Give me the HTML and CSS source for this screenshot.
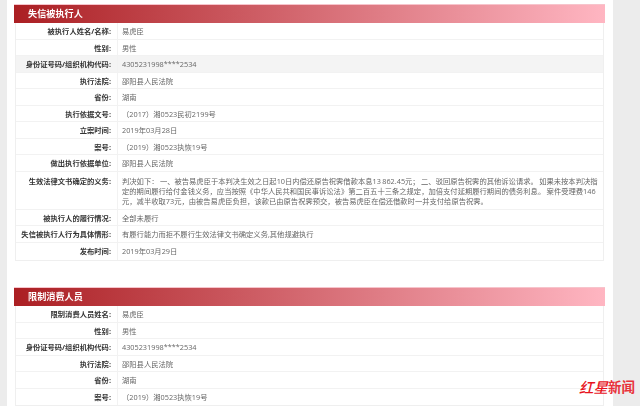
FILE: index.html
```html
<!DOCTYPE html>
<html lang="zh">
<head>
<meta charset="utf-8">
<title>失信被执行人</title>
<link rel="stylesheet" href="styles.css">
</head>
<body>
<div class="gutter-left"></div>
<main class="page">
  <section class="panel">
    <h2 class="panel-title">失信被执行人</h2>
    <div class="rows">
      <div class="row"><div class="label">被执行人姓名/名称:</div><div class="value">易虎臣</div></div>
      <div class="row"><div class="label">性别:</div><div class="value">男性</div></div>
      <div class="row shaded"><div class="label">身份证号码/组织机构代码:</div><div class="value">4305231998****2534</div></div>
      <div class="row"><div class="label">执行法院:</div><div class="value">邵阳县人民法院</div></div>
      <div class="row"><div class="label">省份:</div><div class="value">湖南</div></div>
      <div class="row"><div class="label">执行依据文号:</div><div class="value">（2017）湘0523民初2199号</div></div>
      <div class="row"><div class="label">立案时间:</div><div class="value">2019年03月28日</div></div>
      <div class="row"><div class="label">案号:</div><div class="value">（2019）湘0523执恢19号</div></div>
      <div class="row"><div class="label">做出执行依据单位:</div><div class="value">邵阳县人民法院</div></div>
      <div class="row tall"><div class="label">生效法律文书确定的义务:</div><div class="value">判决如下： 一、被告易虎臣于本判决生效之日起10日内偿还原告祝霁借款本息13 862.45元； 二、驳回原告祝霁的其他诉讼请求。 如果未按本判决指定的期间履行给付金钱义务，应当按照《中华人民共和国民事诉讼法》第二百五十三条之规定，加倍支付延期履行期间的债务利息。 案件受理费146元，减半收取73元，由被告易虎臣负担，该款已由原告祝霁预交，被告易虎臣在偿还借款时一并支付给原告祝霁。</div></div>
      <div class="row"><div class="label">被执行人的履行情况:</div><div class="value">全部未履行</div></div>
      <div class="row"><div class="label">失信被执行人行为具体情形:</div><div class="value">有履行能力而拒不履行生效法律文书确定义务,其他规避执行</div></div>
      <div class="row"><div class="label">发布时间:</div><div class="value">2019年03月29日</div></div>
    </div>
  </section>
  <section class="panel">
    <h2 class="panel-title">限制消费人员</h2>
    <div class="rows">
      <div class="row"><div class="label">限制消费人员姓名:</div><div class="value">易虎臣</div></div>
      <div class="row"><div class="label">性别:</div><div class="value">男性</div></div>
      <div class="row"><div class="label">身份证号码/组织机构代码:</div><div class="value">4305231998****2534</div></div>
      <div class="row"><div class="label">执行法院:</div><div class="value">邵阳县人民法院</div></div>
      <div class="row"><div class="label">省份:</div><div class="value">湖南</div></div>
      <div class="row"><div class="label">案号:</div><div class="value">（2019）湘0523执恢19号</div></div>
    </div>
  </section>
</main>
<div class="gutter-right"></div>
<div class="watermark"><span class="wm-red">红星</span><span class="wm-news">新闻</span></div>
</body>
</html>
```
FILE: styles.css
```css
* { box-sizing: border-box; }
html, body { margin: 0; height: 406px; overflow: hidden; }
body {
  display: flex;
  background: #ececec;
  font-family: "Open Sans", "Noto Sans CJK SC", sans-serif;
  font-size: 7.3px;
  color: #666;
}
.gutter-left { width: 7px; flex: none; }
.gutter-right { width: 27px; flex: none; }
.page {
  width: 606px;
  flex: none;
  background: #fff;
  padding: 3.5px 8px 0 7px;
  filter: blur(0.4px);
}
.panel { margin-bottom: 26px; }
.panel-title {
  margin: 0;
  height: 19.5px;
  line-height: 18.5px;
  padding-left: 14px;
  font-size: 9.15px;
  font-weight: bold;
  color: #fff;
  background: linear-gradient(to right, #ab1f23, #ffb6c2);
  border-top: 1px solid #f7c4cc;
}
.rows {
  margin: 0 1px;
  border-right: 1px solid #efefef;
  border-left: 1px solid #efefef;
  border-bottom: 1px solid #efefef;
}
.row {
  display: flex;
  height: 16.55px;
  border-bottom: 1px solid #f2f2f2;
}
.row:last-child { border-bottom: 0; }
.row.shaded { background: #f4f4f4; }
.row.tall { height: 38px; }
.label {
  width: 102px;
  flex: none;
  padding: 3px 6px 0 0;
  line-height: 10px;
  text-align: right;
  font-weight: bold;
  color: #333;
  border-right: 1px solid #f2f2f2;
}
.value {
  flex: 1;
  padding: 3px 0 0 4px;
  line-height: 10.2px;
  word-spacing: -0.5px;
}
.row.tall .label,
.row.tall .value { padding-top: 4px; }
.watermark {
  position: absolute;
  right: 5px;
  bottom: 10px;
  display: flex;
  align-items: flex-end;
  color: #e8323a;
}
.wm-red {
  font-family: "Noto Sans CJK SC", sans-serif;
  font-size: 14.5px;
  font-weight: 500;
  font-style: italic;
  line-height: 19px;
  color: #e8141e;
}
.wm-news {
  font-family: "Liberation Serif", "Noto Sans CJK SC", serif;
  font-size: 13.5px;
  font-weight: bold;
  line-height: 16px;
}
```
